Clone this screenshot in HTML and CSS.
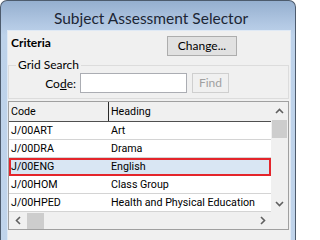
FILE: index.html
```html
<!DOCTYPE html>
<html>
<head>
<meta charset="utf-8">
<link rel="stylesheet" href="styles.css">
</head>
<body>
<div class="window">
  <div class="titlebar">Subject Assessment Selector</div>
  <div class="client">
    <div class="criteria-row">
      <span class="criteria">Criteria</span>
      <button class="btn change">Change...</button>
    </div>
    <fieldset class="grid-search">
      <legend>Grid Search</legend>
      <div class="search-row">
        <label class="code-label">Co<u>d</u>e:</label>
        <input class="code-input" type="text">
        <button class="btn find" disabled>Find</button>
      </div>
    </fieldset>
    <div class="list">
      <div class="table">
        <div class="hdr">
          <div class="c1">Code</div>
          <div class="c2 hsep">Heading</div>
        </div>
        <div class="row"><div class="c1">J/00ART</div><div class="c2">Art</div></div>
        <div class="row"><div class="c1">J/00DRA</div><div class="c2">Drama</div></div>
        <div class="row selected"><div class="c1">J/00ENG</div><div class="c2">English</div></div>
        <div class="row"><div class="c1">J/00HOM</div><div class="c2">Class Group</div></div>
        <div class="row"><div class="c1">J/00HPED</div><div class="c2">Health and Physical Education</div></div>
      </div>
      <div class="vscroll">
        <div class="sbtn">
          <svg width="9" height="6" viewBox="0 0 9 6"><polyline points="1,5 4.5,1.5 8,5" fill="none" stroke="#606060" stroke-width="1.6"/></svg>
        </div>
        <div class="vthumb"></div>
        <div class="vtrack"></div>
        <div class="sbtn">
          <svg width="9" height="6" viewBox="0 0 9 6"><polyline points="1,1 4.5,4.5 8,1" fill="none" stroke="#606060" stroke-width="1.6"/></svg>
        </div>
      </div>
      <div class="hscroll">
        <div class="sbtn">
          <svg width="6" height="9" viewBox="0 0 6 9"><polyline points="5,1 1.5,4.5 5,8" fill="none" stroke="#606060" stroke-width="1.6"/></svg>
        </div>
        <div class="hthumb"></div>
        <div class="htrack"></div>
        <div class="sbtn">
          <svg width="6" height="9" viewBox="0 0 6 9"><polyline points="1,1 4.5,4.5 1,8" fill="none" stroke="#606060" stroke-width="1.6"/></svg>
        </div>
      </div>
      <div class="corner"></div>
    </div>
  </div>
</div>
</body>
</html>
```
FILE: styles.css
```css
html, body {
  margin: 0;
  padding: 0;
  overflow: hidden;
  background: #ffffff;
}

.window {
  box-sizing: border-box;
  width: 296px;
  height: 250px;
  border: 1px solid #4d5b6d;
  border-bottom: none;
  border-radius: 7px 7px 0 0;
  background: linear-gradient(#95afcf 0px, #b3c9e4 24px, #bdd2ea 34px, #c0d4eb 100%);
  padding: 0 4px 0 6px;
  display: flex;
  flex-direction: column;
}

.titlebar {
  height: 20px;
  padding: 7px 0 2px 4px;
  line-height: 20px;
  text-align: center;
  font-family: Lato, "Noto Sans", sans-serif;
  font-size: 15.5px;
  color: #1c2635;
}

.client {
  flex: 1;
  background: #f0f0f0;
  border: 1px solid #dfe9f5;
  border-bottom: none;
  display: flex;
  flex-direction: column;
  font-family: Lato, "Noto Sans", sans-serif;
  font-size: 12px;
  color: #000;
}

.criteria-row {
  display: flex;
  align-items: flex-start;
  height: 22px;
  padding-top: 5px;
}

.criteria {
  font-weight: bold;
  line-height: 14px;
  padding-left: 3px;
}

.btn {
  box-sizing: border-box;
  height: 20px;
  padding: 0;
  font-family: Lato, "Noto Sans", sans-serif;
  font-size: 12px;
  line-height: 18px;
  border: 1px solid #adadad;
  background: #e1e1e1;
  color: #000;
}

.change {
  width: 70px;
  margin-left: auto;
  margin-right: 53px;
}

.grid-search {
  margin: 0 1px 0 0;
  padding: 0 0 5px 0;
  border: 1px solid #dcdcdc;
  min-inline-size: 0;
}

.grid-search legend {
  margin-left: 7px;
  padding: 0 2px;
  line-height: 14px;
  color: #000;
}

.search-row {
  display: flex;
  align-items: center;
  margin-top: 1px;
  height: 20px;
}

.code-label {
  width: 67px;
  text-align: right;
  margin-right: 4px;
}

.code-input {
  box-sizing: border-box;
  width: 107px;
  height: 20px;
  margin: 0 5px 0 0;
  border: 1px solid #abadb3;
  background: #fff;
  padding: 0;
}

.find {
  width: 37px;
  background: #f0f0f0;
  border-color: #cfcfcf;
  color: #a0a0a0;
}

.list {
  margin: 2px 1px 0 0;
  border: 1px solid #a0a0a0;
  background: #fff;
  display: grid;
  grid-template-columns: 262px 17px;
  grid-template-rows: 110px 17px;
  font-family: Roboto, "Liberation Sans", sans-serif;
  font-size: 10.7px;
}

.table {
  display: flex;
  flex-direction: column;
}

.hdr {
  display: flex;
  height: 19px;
  border-bottom: 1px solid #505050;
  background: #f0f0f0;
  line-height: 19px;
}

.row {
  display: flex;
  height: 17px;
  border-bottom: 1px solid #d4d4d4;
  line-height: 17px;
}

.c1 {
  width: 97px;
  padding-left: 2px;
}

.c2 {
  flex: 1;
  padding-left: 2px;
  white-space: nowrap;
}

.hdr .c2 {
  border-left: 1px solid #2a2a2a;
}

.row .c2 {
  padding-left: 3px;
}

.selected {
  background: #d9e6f3;
  outline: 2px solid #e4252b;
  outline-offset: -2px;
}

.vscroll {
  background: #f0f0f0;
  display: flex;
  flex-direction: column;
}

.vscroll .sbtn {
  height: 17px;
  display: flex;
  align-items: center;
  justify-content: center;
}

.vthumb {
  height: 18px;
  margin: 1px 1px 0 1px;
  background: #cdcdcd;
}

.vtrack {
  flex: 1;
}

.hscroll {
  background: #f0f0f0;
  display: flex;
}

.hscroll .sbtn {
  width: 17px;
  display: flex;
  align-items: center;
  justify-content: center;
}

.hthumb {
  width: 17px;
  margin: 1px 0 0 1px;
  background: #cdcdcd;
}

.htrack {
  flex: 1;
}

.corner {
  background: #f0f0f0;
}
```
